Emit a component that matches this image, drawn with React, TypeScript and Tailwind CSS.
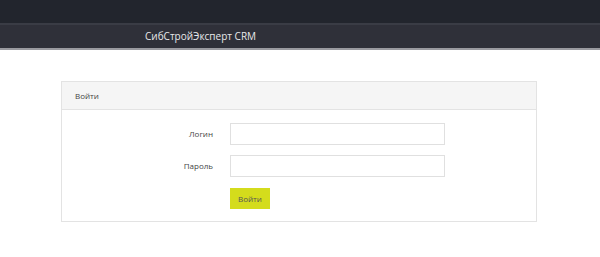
export default function App() {
  return (
    <div className="w-[600px] h-[257px] bg-white" style={{ fontFamily: '"Open Sans", "Noto Sans", sans-serif' }}>
      <div className="h-[23px] bg-[#22252d]" />
      <div className="h-[2px] bg-[#3a3c45]" />
      <div className="h-[23px] bg-[#2f3039] flex items-center pl-[145px] text-[10px] text-[#e8e8ea]">
        СибСтройЭксперт CRM
      </div>
      <div className="h-[2px] bg-[#9a9aa0]" />
      <div className="pt-[31px] pl-[61px]">
        <div className="w-[476px] border border-[#e3e3e3]">
          <div className="h-[28px] bg-[#f5f5f5] border-b border-[#e3e3e3] flex items-center pl-[13px] text-[8px] text-[#444]">
            Войти
          </div>
          <div className="pt-[13px] pb-[12px]">
            <div className="flex items-center h-[22px]">
              <div className="w-[151px] text-right text-[8px] text-[#444]">Логин</div>
              <div className="ml-[17px] w-[215px] h-[22px] border border-[#e0e0e0] bg-white" />
            </div>
            <div className="flex items-center h-[22px] mt-[10px]">
              <div className="w-[151px] text-right text-[8px] text-[#444]">Пароль</div>
              <div className="ml-[17px] w-[215px] h-[22px] border border-[#e0e0e0] bg-white" />
            </div>
            <div className="mt-[11px] ml-[168px]">
              <div className="w-[40px] h-[21px] bg-[#d4dc1c] flex items-center justify-center text-[8px] text-[#555]">
                Войти
              </div>
            </div>
          </div>
        </div>
      </div>
    </div>
  );
}
